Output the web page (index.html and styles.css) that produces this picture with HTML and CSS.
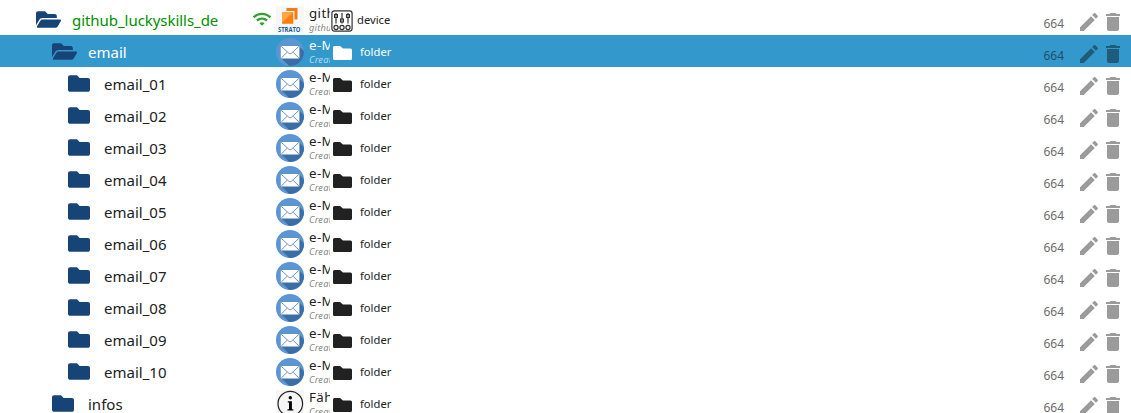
FILE: index.html
```
<!DOCTYPE html>
<html lang="de">
<head>
<meta charset="utf-8">
<title>Objects</title>
<link rel="stylesheet" href="styles.css">
</head>
<body>
<svg class="sprite" aria-hidden="true">
  <defs>
    <clipPath id="disc"><circle cx="14" cy="14" r="14"/></clipPath>
  </defs>
  <symbol id="open" viewBox="0 64 576 384"><path d="M572.694 292.093L500.27 416.248A63.997 63.997 0 0 1 444.989 448H45.025c-18.523 0-30.064-20.093-20.731-36.093l72.424-124.155A64 64 0 0 1 152 256h399.964c18.523 0 30.064 20.093 20.73 36.093zM152 224h328v-48c0-26.51-21.49-48-48-48H272l-64-64H48C21.49 64 0 85.49 0 112v278.046l69.077-118.418C86.214 242.25 117.989 224 152 224z"/></symbol>
  <symbol id="closed" viewBox="0 64 512 384"><path d="M464 128H272l-64-64H48C21.49 64 0 85.49 0 112v288c0 26.51 21.49 48 48 48h416c26.51 0 48-21.49 48-48V176c0-26.51-21.49-48-48-48z"/></symbol>
  <symbol id="wifi" viewBox="0 0 24 24"><path d="M1 9l2 2c4.970-4.970 13.030-4.970 18 0l2-2C16.930 2.930 7.080 2.930 1 9zm8 8l3 3 3-3c-1.650-1.660-4.340-1.660-6 0zm-4-4l2 2c2.760-2.760 7.240-2.760 10 0l2-2C15.140 9.140 8.870 9.140 5 13z"/></symbol>
  <symbol id="mail" viewBox="0 0 28 28">
    <circle cx="14" cy="14" r="14" fill="#5b96d3"/>
    <path clip-path="url(#disc)" fill="#3b6ea8" d="M5 20L23.200 8.500l10 10V33H18.500z"/>
    <rect x="4.800" y="7.900" width="18.600" height="12.600" rx=".8" fill="#fff"/>
    <path d="M5.300 8.400l7.500 6.900q1.300 1.100 2.600 0l7.500-6.900M5.300 20l6-5.900M22.900 20l-6-5.900" fill="none" stroke="#5f87b8" stroke-width=".9"/>
  </symbol>
  <symbol id="type" viewBox="0 0 19 14"><path d="M1.500 0H7l3 2.400h7.500Q19 2.400 19 3.900v8.600q0 1.500-1.500 1.500h-16Q0 14 0 12.500v-11Q0 0 1.500 0z"/></symbol>
  <symbol id="pencil" viewBox="0 0 24 24"><path d="M3 17.250V21h3.750L17.810 9.940l-3.750-3.750L3 17.250zM20.710 7.040c.39-.39.39-1.020 0-1.410l-2.340-2.340c-.39-.39-1.020-.39-1.410 0l-1.830 1.830 3.750 3.750 1.830-1.830z"/></symbol>
  <symbol id="trash" viewBox="0 0 24 24"><path d="M6 19c0 1.100.9 2 2 2h8c1.100 0 2-.9 2-2V7H6v12zM19 4h-3.500l-1-1h-5l-1 1H5v2h14V4z"/></symbol>
</svg>
<main class="tree">
  <div class="row">
    <div class="name level-1 connected"><svg class="node open"><use href="#open"/></svg><span>github_luckyskills_de</span></div>
    <svg class="wifi"><use href="#wifi"/></svg>
    <svg class="avatar" viewBox="0 0 28 28">
      <rect width="28" height="28" fill="#f7f7f7"/>
      <path d="M10.500 2H21.500v11.500h-3V5h-8z" fill="#f47a14"/>
      <path d="M6 6.200h11.300v11.600H6z" fill="#ff7f0a"/><path d="M6 6.200h11.300L6 16.500z" fill="#ffa544"/>
      <text class="logo-text" x="2" y="25.500" textLength="22.500" lengthAdjust="spacingAndGlyphs">STRATO</text>
    </svg>
    <div class="caption"><b>github</b><i>github</i></div>
    <div class="type device"><svg class="mixer" viewBox="0 0 22 22"><g fill="none" stroke="#333" stroke-width="1.200"><rect x=".9" y=".9" width="20.200" height="20.200" rx="2.500"/><path d="M5 3v10.500M11 3v10.500M17 3v10.500"/><circle cx="5" cy="17.500" r="2.100"/><circle cx="11" cy="17.500" r="2.100"/><circle cx="17" cy="17.500" r="2.100"/></g><g fill="#999" stroke="#333"><rect x="3.500" y="4.500" width="3" height="3"/><rect x="9.500" y="9" width="3" height="3"/><rect x="15.500" y="4.500" width="3" height="3"/></g></svg><span>device</span></div>
    <div class="tools"><span>664</span><svg><use href="#pencil"/></svg><svg><use href="#trash"/></svg></div>
  </div>
  <div class="row selected"><div class="name level-2"><svg class="node open"><use href="#open"/></svg><span>email</span></div><svg class="avatar"><use href="#mail"/></svg><div class="caption"><b>e-Mail</b><i>Created</i></div><div class="type"><svg><use href="#type"/></svg><span>folder</span></div><div class="tools"><span>664</span><svg><use href="#pencil"/></svg><svg><use href="#trash"/></svg></div></div>
  <div class="row"><div class="name level-3"><svg class="node"><use href="#closed"/></svg><span>email_01</span></div><svg class="avatar"><use href="#mail"/></svg><div class="caption"><b>e-Mail</b><i>Created</i></div><div class="type"><svg><use href="#type"/></svg><span>folder</span></div><div class="tools"><span>664</span><svg><use href="#pencil"/></svg><svg><use href="#trash"/></svg></div></div>
  <div class="row"><div class="name level-3"><svg class="node"><use href="#closed"/></svg><span>email_02</span></div><svg class="avatar"><use href="#mail"/></svg><div class="caption"><b>e-Mail</b><i>Created</i></div><div class="type"><svg><use href="#type"/></svg><span>folder</span></div><div class="tools"><span>664</span><svg><use href="#pencil"/></svg><svg><use href="#trash"/></svg></div></div>
  <div class="row"><div class="name level-3"><svg class="node"><use href="#closed"/></svg><span>email_03</span></div><svg class="avatar"><use href="#mail"/></svg><div class="caption"><b>e-Mail</b><i>Created</i></div><div class="type"><svg><use href="#type"/></svg><span>folder</span></div><div class="tools"><span>664</span><svg><use href="#pencil"/></svg><svg><use href="#trash"/></svg></div></div>
  <div class="row"><div class="name level-3"><svg class="node"><use href="#closed"/></svg><span>email_04</span></div><svg class="avatar"><use href="#mail"/></svg><div class="caption"><b>e-Mail</b><i>Created</i></div><div class="type"><svg><use href="#type"/></svg><span>folder</span></div><div class="tools"><span>664</span><svg><use href="#pencil"/></svg><svg><use href="#trash"/></svg></div></div>
  <div class="row"><div class="name level-3"><svg class="node"><use href="#closed"/></svg><span>email_05</span></div><svg class="avatar"><use href="#mail"/></svg><div class="caption"><b>e-Mail</b><i>Created</i></div><div class="type"><svg><use href="#type"/></svg><span>folder</span></div><div class="tools"><span>664</span><svg><use href="#pencil"/></svg><svg><use href="#trash"/></svg></div></div>
  <div class="row"><div class="name level-3"><svg class="node"><use href="#closed"/></svg><span>email_06</span></div><svg class="avatar"><use href="#mail"/></svg><div class="caption"><b>e-Mail</b><i>Created</i></div><div class="type"><svg><use href="#type"/></svg><span>folder</span></div><div class="tools"><span>664</span><svg><use href="#pencil"/></svg><svg><use href="#trash"/></svg></div></div>
  <div class="row"><div class="name level-3"><svg class="node"><use href="#closed"/></svg><span>email_07</span></div><svg class="avatar"><use href="#mail"/></svg><div class="caption"><b>e-Mail</b><i>Created</i></div><div class="type"><svg><use href="#type"/></svg><span>folder</span></div><div class="tools"><span>664</span><svg><use href="#pencil"/></svg><svg><use href="#trash"/></svg></div></div>
  <div class="row"><div class="name level-3"><svg class="node"><use href="#closed"/></svg><span>email_08</span></div><svg class="avatar"><use href="#mail"/></svg><div class="caption"><b>e-Mail</b><i>Created</i></div><div class="type"><svg><use href="#type"/></svg><span>folder</span></div><div class="tools"><span>664</span><svg><use href="#pencil"/></svg><svg><use href="#trash"/></svg></div></div>
  <div class="row"><div class="name level-3"><svg class="node"><use href="#closed"/></svg><span>email_09</span></div><svg class="avatar"><use href="#mail"/></svg><div class="caption"><b>e-Mail</b><i>Created</i></div><div class="type"><svg><use href="#type"/></svg><span>folder</span></div><div class="tools"><span>664</span><svg><use href="#pencil"/></svg><svg><use href="#trash"/></svg></div></div>
  <div class="row"><div class="name level-3"><svg class="node"><use href="#closed"/></svg><span>email_10</span></div><svg class="avatar"><use href="#mail"/></svg><div class="caption"><b>e-Mail</b><i>Created</i></div><div class="type"><svg><use href="#type"/></svg><span>folder</span></div><div class="tools"><span>664</span><svg><use href="#pencil"/></svg><svg><use href="#trash"/></svg></div></div>
  <div class="row">
    <div class="name level-2"><svg class="node"><use href="#closed"/></svg><span>infos</span></div>
    <svg class="avatar" viewBox="0 0 28 28"><rect width="28" height="28" fill="#f5f5f5"/><circle cx="14.300" cy="13.700" r="12.300" fill="none" stroke="#222" stroke-width="1.200"/><circle cx="14.300" cy="7.800" r="1.700"/><path d="M11.800 11.200h4.100v8h1.400v1.300h-5.800v-1.300h1.500v-6.700h-1.200z"/></svg>
    <div class="caption"><b>Fähren</b><i>Created</i></div><div class="type"><svg><use href="#type"/></svg><span>folder</span></div><div class="tools"><span>664</span><svg><use href="#pencil"/></svg><svg><use href="#trash"/></svg></div>
  </div>
</main>
</body>
</html>
```
FILE: styles.css
```
html, body { margin: 0; height: 413px; overflow: hidden; background: #fff; }
body { font-family: "Noto Sans", "Open Sans", sans-serif; color: #212121; }
svg { display: block; flex: none; }
.sprite { position: absolute; width: 0; height: 0; }
.tree { padding-top: 3px; }
.row {
  display: grid;
  grid-template-columns: 252px 24px 28px 26px 1fr auto;
  height: 32px;
  overflow: hidden;
}
.selected { background: #3399cc; color: #fff; }
.name { display: flex; grid-column: 1; box-sizing: border-box; white-space: nowrap; font-size: 15px; line-height: 32px; }
.name span { margin-top: 1px; }
.level-1 { padding-left: 36px; }
.level-2 { padding-left: 52px; }
.level-3 { padding-left: 68px; }
.connected { color: #008f00; }
.connected span { letter-spacing: -0.05px; }
.node { width: 22px; height: 17px; margin: 7.5px 14px 0 0; fill: #164477; }
.node.open { width: 25px; margin: 8px 11px 0 0; }
.wifi { width: 20px; height: 20px; margin: 6px 0 0; fill: #2ea12e; }
.avatar { grid-column: 3; width: 28px; height: 28px; margin-top: 3px; }
.logo-text { font: bold 7.8px "Open Sans", sans-serif; fill: #145b95; }
.caption { grid-column: 4; margin-left: 5px; overflow: hidden; white-space: nowrap; }
.caption b { display: block; height: 18px; font-size: 13.3px; font-weight: 400; line-height: 20px; letter-spacing: 0.4px; }
.caption i { display: block; font-size: 9.3px; line-height: 14px; letter-spacing: 0.2px; color: #858585; }
.selected .caption i { color: #b5d9ec; }
.type { grid-column: 5; display: flex; padding-left: 3px; font-size: 11.2px; line-height: 32px; }
.type span { margin-top: 1px; }
.type svg { width: 19px; height: 14px; margin: 11px 8px 0 0; fill: #212121; }
.selected .type svg { fill: #fff; }
.type.device { padding-left: 1px; }
.type .mixer { width: 22px; height: 22px; margin: 7px 4px 0 0; }
.tools { grid-column: 6; display: flex; padding-right: 6px; color: #6b6b6b; font-size: 12px; line-height: 32px; }
.tools span { margin: 5px 13px 0 0; }
.tools svg { width: 24px; height: 24px; margin-top: 7px; fill: #9b9b9b; }
.selected .tools { color: #1f4f69; }
.selected .tools svg { fill: #1f5c7a; }
```
